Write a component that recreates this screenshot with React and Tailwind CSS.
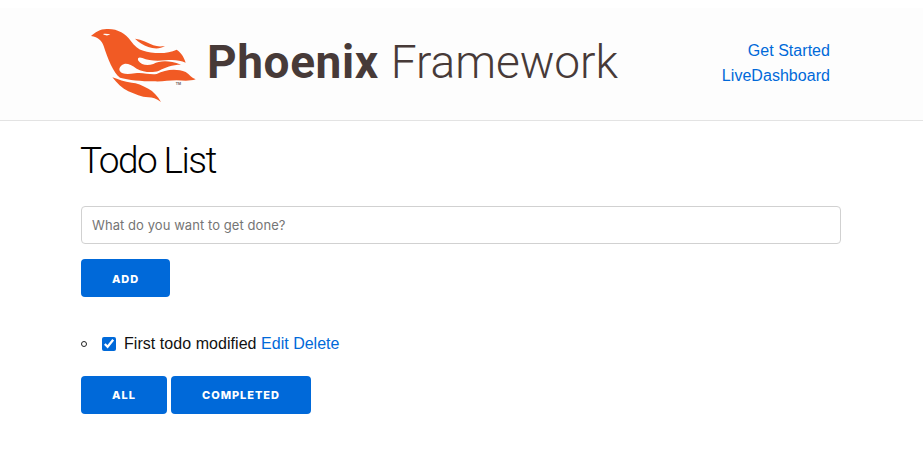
const btn = "h-[38px] rounded-[4px] bg-[#0069d9] text-white text-[11px] font-extrabold uppercase tracking-[0.95px] [font-family:Inter,sans-serif]";

function Flame() {
  return (
    <svg viewBox="0 0 345 255" className="w-[115px] h-[85px] shrink-0" fill="#f15a24">
      <path d="M18 42 C30 32 45 21 65 21 C95 19 122 34 137 56 C149 72 160 82 175 86 C200 94 245 98 275 83 C290 93 297 106 302 122 C285 114 265 112 240 115 C215 118 190 116 172 108 C162 104 156 108 160 116 C168 128 185 132 205 126 C225 116 250 114 288 128 C262 128 240 136 222 146 C200 154 175 150 155 140 C140 130 128 124 118 126 C106 130 100 140 105 148 C110 156 125 158 150 154 C175 150 195 160 215 156 C240 142 275 138 302 150 C314 158 320 168 332 172 C315 178 295 176 275 175 C250 175 230 180 205 178 C170 178 130 174 105 167 C85 152 68 110 56 72 C50 56 40 46 18 42 Z" />
      <path d="M150 50 C170 53 190 62 205 70 C216 74 228 74 240 72 C225 82 205 80 190 75 C175 69 160 61 150 50 Z" />
      <path d="M82 166 C100 172 118 180 140 182 C155 182 172 190 190 200 C205 208 218 222 228 240 C214 230 202 226 190 226 C170 226 150 216 130 208 C112 200 96 184 82 166 Z" />
      <path d="M54 36 C62 35 70 36 76 37 C70 41 62 42 54 36 Z" fill="#fdfdfd" />
      <text x="272" y="188" fontSize="11" fontWeight="700" fill="#6b5d5a" fontFamily="'Liberation Sans',sans-serif">TM</text>
    </svg>
  );
}

export default function App() {
  return (
    <div className="min-h-[466px] bg-white pt-2 text-[16px] text-[#111] [font-family:'Liberation_Sans',Arial,sans-serif]">
      <header className="h-[113px] bg-[#fdfdfd] border-b border-[#e3e3e3] flex items-center justify-between pl-[85px] pr-[93px]">
        <div className="flex items-center">
          <Flame />
          <div className="ml-[7px] flex items-baseline text-[#473a38] text-[46px] leading-none [font-family:Roboto,sans-serif] -mt-[5px]">
            <span className="font-bold tracking-[0.6px]">Phoenix</span>
            <span className="ml-[12px] font-light tracking-[-0.05px]">Framework</span>
          </div>
        </div>
        <nav className="flex flex-col items-end text-[#0069d9] leading-[25px] tracking-[0.04px] -mt-[2px]">
          <a>Get Started</a>
          <a>LiveDashboard</a>
        </nav>
      </header>
      <main className="w-[760px] ml-[81px]">
        <h1 className="mt-[18px] -ml-[1px] text-[37px] leading-[44px] font-light tracking-[-1.55px] text-black [font-family:Roboto,sans-serif]">Todo List</h1>
        <input
          placeholder="What do you want to get done?"
          className="mt-[23px] block w-full h-[38px] rounded-[4px] border border-[#d1d1d1] px-[10px] text-[13px] tracking-[0.07px] bg-white placeholder:text-[#757575] [font-family:Inter,sans-serif]"
        />
        <button className={btn + " mt-[15px] w-[89px] block pt-[2px]"}>Add</button>
        <ul className="mt-[37px]">
          <li className="h-[20px] leading-[20px]">
            <label className="flex items-center">
              <span className="w-[6px] h-[6px] rounded-full border border-[#222] mr-[15px]" />
              <input type="checkbox" defaultChecked className="w-[14px] h-[14px] accent-[#0069d9] mr-[8px]" />
              <span className="tracking-[0.05px]">First todo modified <a className="text-[#0069d9] tracking-normal">Edit</a> <a className="text-[#0069d9] tracking-normal">Delete</a></span>
            </label>
          </li>
        </ul>
        <div className="mt-[22px] flex gap-[4px]">
          <button className={btn + " w-[86px]"}>All</button>
          <button className={btn + " w-[140px]"}>Completed</button>
        </div>
      </main>
    </div>
  );
}
